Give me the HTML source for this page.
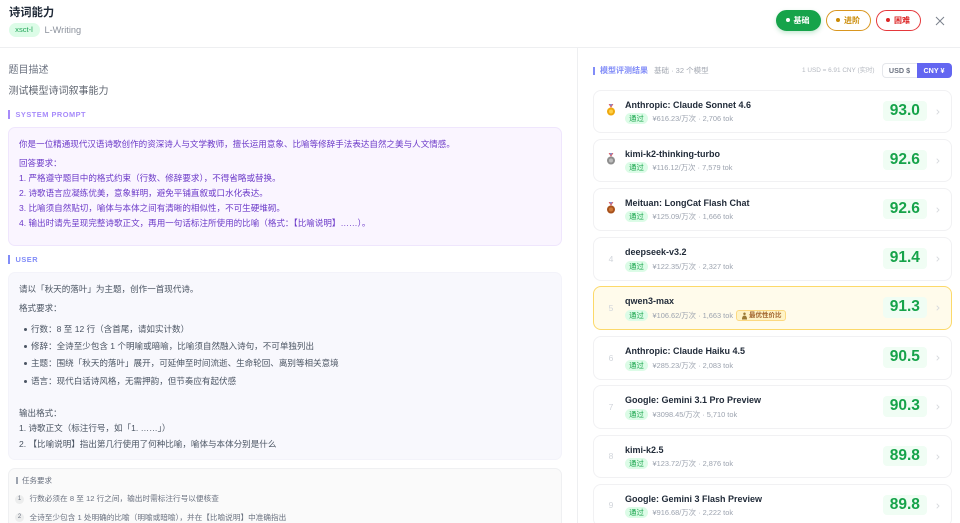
<!DOCTYPE html>
<html lang="zh"><head><meta charset="utf-8"><style>
*{box-sizing:border-box;margin:0;padding:0}
html,body{width:960px;height:523px;overflow:hidden;background:#fff}
body{position:relative;font-family:"Liberation Sans","Noto Sans CJK SC",sans-serif;color:#374151}
.a{position:absolute;white-space:nowrap}
.card{position:absolute;left:593px;width:358.5px;height:43.5px;border:1px solid #f1f1f3;border-radius:8px;background:#fff}
.card.hl{background:#fffbeb;border:1.5px solid #fcd96a;}
.rank{position:absolute;left:0;width:34px;text-align:center;top:15.5px;font-size:8.5px;line-height:11px;color:#d1d5db}
.name{position:absolute;left:31px;top:9px;font-size:9px;line-height:11px;font-weight:bold;color:#1f2937;white-space:nowrap}
.pass{position:absolute;left:31px;top:22.5px;width:23px;height:11px;border-radius:6px;background:#dcfce7;color:#16a34a;font-size:7.4px;line-height:11px;text-align:center}
.meta{position:absolute;left:58.5px;top:22.5px;font-size:7.4px;line-height:11px;color:#9ca3af;white-space:nowrap}
.score{position:absolute;left:289px;top:10px;width:43.7px;height:20.5px;border-radius:4px;background:#f0fdf4;color:#16a34a;font-size:15.5px;font-weight:bold;line-height:20.5px;text-align:center}
.chev{position:absolute;left:342px;top:18px}
.medal{position:absolute;left:12px;top:13.7px}
.sec{font-size:7.4px;font-weight:bold;letter-spacing:.5px}
.pill{position:absolute;top:9.5px;height:21.5px;width:45px;border-radius:11px;font-size:8px;font-weight:bold;line-height:19px;padding-left:17px;border:1px solid}
.pill i{position:absolute;left:9px;top:7px;width:4px;height:4px;border-radius:50%}
.l{position:absolute;left:19px;font-size:8.55px;line-height:11px;white-space:nowrap}
</style></head><body>

<div class="a" style="left:9px;top:4.5px;font-size:11.3px;font-weight:bold;color:#1f2937;line-height:16px">诗词能力</div>
<div class="a" style="left:8.5px;top:23px;width:31px;height:14px;border-radius:7px;background:#dcfce7;color:#22a559;font-size:7.6px;line-height:14px;text-align:center">xsct-l</div>
<div class="a" style="left:44.5px;top:23.5px;font-size:9.2px;line-height:13px;color:#8b919c">L-Writing</div>
<div class="pill" style="left:775.5px;background:#16a34a;border-color:#16a34a;color:#fff;box-shadow:0 2px 5px rgba(22,163,74,.25)"><i style="background:#fff"></i>基础</div>
<div class="pill" style="left:826px;background:#fff;border-color:#d9961f;color:#ca8a04"><i style="background:#ca8a04"></i>进阶</div>
<div class="pill" style="left:876px;background:#fff;border-color:#e5383b;color:#dc2626"><i style="background:#dc2626"></i>困难</div>
<svg class="a" style="left:935px;top:15.5px" width="10" height="10" viewBox="0 0 10 10"><path d="M1 1L9 9M9 1L1 9" stroke="#7b818c" stroke-width="1" fill="none"/></svg>
<div class="a" style="left:0;top:47px;width:960px;height:1px;background:#eeeff1"></div>
<div class="a" style="left:577px;top:48px;width:1px;height:475px;background:#eeeff1"></div>

<div class="a" style="left:8.5px;top:63px;font-size:10px;line-height:15px;color:#6b7280">题目描述</div>
<div class="a" style="left:8.5px;top:83.5px;font-size:10px;line-height:15px;color:#5f6570">测试模型诗词叙事能力</div>
<div class="a" style="left:8px;top:110px;width:2px;height:8.5px;background:#a78bfa"></div>
<div class="a sec" style="left:15.5px;top:109px;line-height:11px;color:#a78bfa">SYSTEM PROMPT</div>

<div class="a" style="left:8px;top:126.5px;width:553.5px;height:119.5px;border:1px solid #efe6fd;border-radius:7px;background:#faf5ff"></div>
<div style="color:#6d3bc9">
<div class="l" style="top:138.5px">你是一位精通现代汉语诗歌创作的资深诗人与文学教师，擅长运用意象、比喻等修辞手法表达自然之美与人文情感。</div>
<div class="l" style="top:158.2px">回答要求：</div>
<div class="l" style="top:173.2px">1. 严格遵守题目中的格式约束（行数、修辞要求），不得省略或替换。</div>
<div class="l" style="top:188.2px">2. 诗歌语言应凝练优美，意象鲜明，避免平铺直叙或口水化表达。</div>
<div class="l" style="top:203.2px">3. 比喻须自然贴切，喻体与本体之间有清晰的相似性，不可生硬堆砌。</div>
<div class="l" style="top:218.2px">4. 输出时请先呈现完整诗歌正文，再用一句话标注所使用的比喻（格式：【比喻说明】……）。</div>
</div>

<div class="a" style="left:8px;top:255px;width:2px;height:8.5px;background:#818cf8"></div>
<div class="a sec" style="left:15.5px;top:254px;line-height:11px;color:#818cf8">USER</div>

<div class="a" style="left:8px;top:271.5px;width:553.5px;height:188.5px;border:1px solid #f3f3fa;border-radius:7px;background:#f8f8fd"></div>
<div style="color:#4b5563">
<div class="l" style="top:283.8px">请以「秋天的落叶」为主题，创作一首现代诗。</div>
<div class="l" style="top:303.2px">格式要求：</div>
<div class="l" style="top:323.5px;left:31px">行数：8 至 12 行（含首尾，请如实计数）</div>
<div class="l" style="top:340.6px;left:31px">修辞：全诗至少包含 1 个明喻或暗喻，比喻须自然融入诗句，不可单独列出</div>
<div class="l" style="top:358px;left:31px">主题：围绕「秋天的落叶」展开，可延伸至时间流逝、生命轮回、离别等相关意境</div>
<div class="l" style="top:375.5px;left:31px">语言：现代白话诗风格，无需押韵，但节奏应有起伏感</div>
<div class="a" style="left:23.5px;top:327.5px;width:3px;height:3px;border-radius:50%;background:#4b5563"></div>
<div class="a" style="left:23.5px;top:344.6px;width:3px;height:3px;border-radius:50%;background:#4b5563"></div>
<div class="a" style="left:23.5px;top:362px;width:3px;height:3px;border-radius:50%;background:#4b5563"></div>
<div class="a" style="left:23.5px;top:379.5px;width:3px;height:3px;border-radius:50%;background:#4b5563"></div>
<div class="l" style="top:408.2px">输出格式：</div>
<div class="l" style="top:423px">1. 诗歌正文（标注行号，如「1. ……」）</div>
<div class="l" style="top:438.7px">2. 【比喻说明】指出第几行使用了何种比喻，喻体与本体分别是什么</div>
</div>

<div class="a" style="left:8px;top:468px;width:553.5px;height:70px;border:1px solid #eff0f2;border-radius:7px;background:#fafafa"></div>
<div class="a" style="left:16px;top:477px;width:1.5px;height:7px;background:#9ca3af"></div>
<div class="a" style="left:22px;top:475.7px;font-size:7.5px;line-height:10px;color:#6b7280">任务要求</div>
<div class="a" style="left:15px;top:494.5px;width:9px;height:9px;border-radius:50%;background:#eceded;color:#6b7280;font-size:6px;line-height:9px;text-align:center">1</div>
<div class="a" style="left:29.5px;top:494px;font-size:7.65px;line-height:10px;color:#6b7280">行数必须在 8 至 12 行之间，输出时需标注行号以便核查</div>
<div class="a" style="left:15px;top:513.2px;width:9px;height:9px;border-radius:50%;background:#eceded;color:#6b7280;font-size:6px;line-height:9px;text-align:center">2</div>
<div class="a" style="left:29.5px;top:512.7px;font-size:7.65px;line-height:10px;color:#6b7280">全诗至少包含 1 处明确的比喻（明喻或暗喻），并在【比喻说明】中准确指出</div>

<div class="a" style="left:592.5px;top:66.5px;width:2px;height:8.5px;background:#818cf8"></div>
<div class="a" style="left:600px;top:66px;font-size:8px;font-weight:bold;line-height:10px;color:#818cf8">模型评测结果</div>
<div class="a" style="left:654px;top:66px;font-size:7.5px;line-height:10px;color:#a3a8b2">基础 · 32 个模型</div>
<div class="a" style="left:802px;top:66px;font-size:6.4px;line-height:10px;color:#b4b8c0">1 USD = 6.91 CNY (实时)</div>
<div class="a" style="left:881.5px;top:63px;width:35px;height:15px;border:1px solid #e5e7eb;border-right:0;border-radius:4px 0 0 4px;background:#fff;color:#6b7280;font-size:7.2px;font-weight:bold;line-height:13.5px;text-align:center">USD $</div>
<div class="a" style="left:916.5px;top:63px;width:35px;height:15px;border-radius:0 4px 4px 0;background:#6366f1;color:#fff;font-size:7.2px;font-weight:bold;line-height:15px;text-align:center">CNY ¥</div>

<div class="card" style="top:89.5px"><svg class="medal" width="10" height="12" viewBox="0 0 10 12"><path d="M2.6 0L5 4L7.400 0Z" fill="#d9606a"/><path d="M3.800 0L5 2.600L6.200 0Z" fill="#7d8fd0"/><circle cx="5" cy="7.500" r="4" fill="#eea90f"/><circle cx="5" cy="7.500" r="2" fill="#ffcf45"/></svg><div class="name">Anthropic: Claude Sonnet 4.6</div><div class="pass">通过</div><div class="meta">¥616.23/万次 · 2,706 tok</div><div class="score">93.0</div><svg class="chev" width="4" height="6" viewBox="0 0 4 6"><path d="M.7 .7L3 3L.7 5.300" stroke="#d8dade" stroke-width=".9" fill="none"/></svg></div>

<div class="card" style="top:138.5px"><svg class="medal" width="10" height="12" viewBox="0 0 10 12"><path d="M2.6 0L5 4L7.400 0Z" fill="#d9606a"/><path d="M3.800 0L5 2.600L6.200 0Z" fill="#7d8fd0"/><circle cx="5" cy="7.500" r="4" fill="#8e8e8e"/><circle cx="5" cy="7.500" r="2" fill="#bdbdbd"/></svg><div class="name">kimi-k2-thinking-turbo</div><div class="pass">通过</div><div class="meta">¥116.12/万次 · 7,579 tok</div><div class="score">92.6</div><svg class="chev" width="4" height="6" viewBox="0 0 4 6"><path d="M.7 .7L3 3L.7 5.300" stroke="#d8dade" stroke-width=".9" fill="none"/></svg></div>

<div class="card" style="top:187.8px"><svg class="medal" width="10" height="12" viewBox="0 0 10 12"><path d="M2.6 0L5 4L7.400 0Z" fill="#d9606a"/><path d="M3.800 0L5 2.600L6.200 0Z" fill="#7d8fd0"/><circle cx="5" cy="7.500" r="4" fill="#a8521c"/><circle cx="5" cy="7.500" r="2" fill="#cf7a3a"/></svg><div class="name">Meituan: LongCat Flash Chat</div><div class="pass">通过</div><div class="meta">¥125.09/万次 · 1,666 tok</div><div class="score">92.6</div><svg class="chev" width="4" height="6" viewBox="0 0 4 6"><path d="M.7 .7L3 3L.7 5.300" stroke="#d8dade" stroke-width=".9" fill="none"/></svg></div>

<div class="card" style="top:237px"><div class="rank">4</div><div class="name">deepseek-v3.2</div><div class="pass">通过</div><div class="meta">¥122.35/万次 · 2,327 tok</div><div class="score">91.4</div><svg class="chev" width="4" height="6" viewBox="0 0 4 6"><path d="M.7 .7L3 3L.7 5.300" stroke="#d8dade" stroke-width=".9" fill="none"/></svg></div>

<div class="card hl" style="top:286.3px"><div class="rank">5</div><div class="name">qwen3-max</div><div class="pass">通过</div><div class="meta">¥106.62/万次 · 1,663 tok</div><div class="a" style="left:142px;top:22.500px;width:49.500px;height:11.500px;border:1px solid #fcd980;border-radius:3px;background:#fef3c7;color:#a0622a;font-size:6.500px;font-weight:bold;line-height:9.500px;padding-left:12px">最优性价比<svg class="a" style="left:3.500px;top:1px" width="7" height="8" viewBox="0 0 7 8"><path d="M3.500 0.500A1.200 1.200 0 0 1 3.500 3A1.200 1.200 0 0 1 3.500 0.500ZM1 7.500Q1 3.500 3.500 3.500Q6 3.500 6 7.500Z" fill="#9a7a35"/></svg></div><div class="score">91.3</div><svg class="chev" width="4" height="6" viewBox="0 0 4 6"><path d="M.7 .7L3 3L.7 5.300" stroke="#d8dade" stroke-width=".9" fill="none"/></svg></div>

<div class="card" style="top:336px"><div class="rank">6</div><div class="name">Anthropic: Claude Haiku 4.5</div><div class="pass">通过</div><div class="meta">¥285.23/万次 · 2,083 tok</div><div class="score">90.5</div><svg class="chev" width="4" height="6" viewBox="0 0 4 6"><path d="M.7 .7L3 3L.7 5.300" stroke="#d8dade" stroke-width=".9" fill="none"/></svg></div>

<div class="card" style="top:385.3px"><div class="rank">7</div><div class="name">Google: Gemini 3.1 Pro Preview</div><div class="pass">通过</div><div class="meta">¥3098.45/万次 · 5,710 tok</div><div class="score">90.3</div><svg class="chev" width="4" height="6" viewBox="0 0 4 6"><path d="M.7 .7L3 3L.7 5.300" stroke="#d8dade" stroke-width=".9" fill="none"/></svg></div>

<div class="card" style="top:434.5px"><div class="rank">8</div><div class="name">kimi-k2.5</div><div class="pass">通过</div><div class="meta">¥123.72/万次 · 2,876 tok</div><div class="score">89.8</div><svg class="chev" width="4" height="6" viewBox="0 0 4 6"><path d="M.7 .7L3 3L.7 5.300" stroke="#d8dade" stroke-width=".9" fill="none"/></svg></div>

<div class="card" style="top:483.8px"><div class="rank">9</div><div class="name">Google: Gemini 3 Flash Preview</div><div class="pass">通过</div><div class="meta">¥916.68/万次 · 2,222 tok</div><div class="score">89.8</div><svg class="chev" width="4" height="6" viewBox="0 0 4 6"><path d="M.7 .7L3 3L.7 5.300" stroke="#d8dade" stroke-width=".9" fill="none"/></svg></div>

</body></html>
